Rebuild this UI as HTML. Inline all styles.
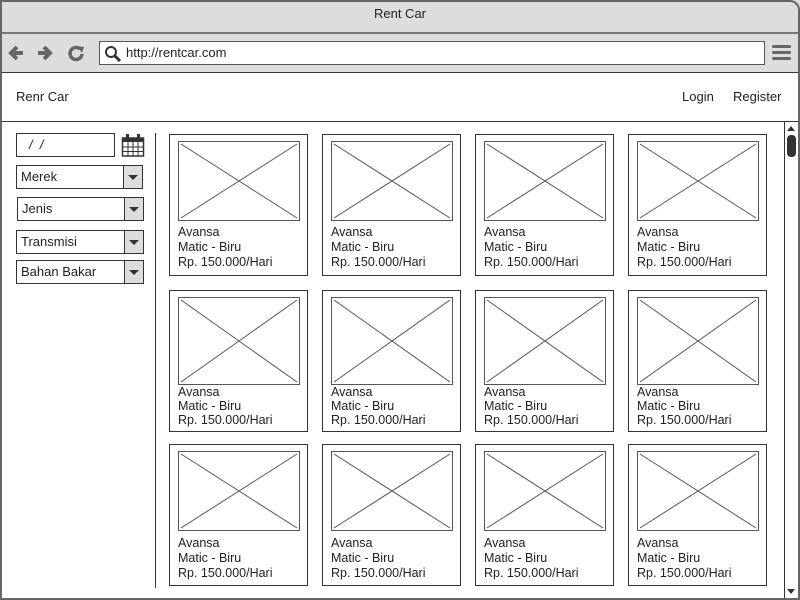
<!DOCTYPE html>
<html><head><meta charset="utf-8"><style>
*{margin:0;padding:0;box-sizing:border-box}
body{width:800px;height:600px;position:relative;background:#fff;font-family:"Liberation Sans",sans-serif;font-size:13px;color:#222;overflow:hidden}
.a{position:absolute}
.frame{left:0;top:0;width:800px;height:600px;border:2px solid #666;border-radius:0 10px 0 0}
.card{position:absolute;width:139px;height:142px;border:1px solid #333;background:#fff}
.card svg{position:absolute;left:8px;top:6px}
.card .t{position:absolute;left:8px;font-size:12.5px;line-height:15px}
.sel{position:absolute;height:24px;border:1px solid #333;background:#fff;font-size:13px;padding:3px 4px}
.sel b{position:absolute;right:0;top:0;width:19px;height:22px;background:#ddd;border-left:1px solid #333}
.sel b:after{content:"";position:absolute;left:4px;top:9px;border-left:5px solid transparent;border-right:5px solid transparent;border-top:5px solid #333}
</style></head><body>
<div class="a" style="left:0;top:0;width:800px;height:72px;background:#ddd"></div>
<div class="a" style="left:0;top:32px;width:800px;height:2px;background:#777"></div>
<div class="a" style="left:0;top:72px;width:800px;height:1px;background:#333"></div>
<div class="a" style="left:0;top:121px;width:800px;height:1px;background:#333"></div>
<div class="a" style="left:0;top:6px;width:800px;text-align:center;font-size:13px">Rent Car</div>
<svg class="a" style="left:8px;top:42px" width="80" height="22">
<path d="M3 11h12M9 5l-6 6 6 6" stroke="#666" stroke-width="4" fill="none"/>
<path d="M30 11h12M36 5l6 6-6 6" stroke="#666" stroke-width="4" fill="none"/>
<path d="M72 7a6 6 0 1 0 2 5" stroke="#666" stroke-width="3.5" fill="none"/><path d="M69 4l7 1-2 6z" fill="#666"/>
</svg>
<div class="a" style="left:99px;top:41px;width:666px;height:24px;border:1px solid #555;background:#fff"></div>
<svg class="a" style="left:104px;top:45px" width="18" height="18"><circle cx="7" cy="7" r="5" stroke="#333" stroke-width="2" fill="none"/><path d="M11 11l5 5" stroke="#333" stroke-width="3"/></svg>
<div class="a" style="left:126px;top:45px;font-size:13px">http://rentcar.com</div>
<div class="a" style="left:772px;top:45px;width:19px;height:3px;background:#666;border-radius:2px"></div>
<div class="a" style="left:772px;top:51px;width:19px;height:3px;background:#666;border-radius:2px"></div>
<div class="a" style="left:772px;top:57px;width:19px;height:3px;background:#666;border-radius:2px"></div>
<div class="a" style="left:16px;top:89px">Renr Car</div>
<div class="a" style="left:682px;top:89px">Login</div>
<div class="a" style="left:733px;top:89px">Register</div>
<div class="a" style="left:16px;top:133px;width:99px;height:24px;border:1px solid #333;padding:3px 12px;font-style:italic">/ &nbsp;/</div>
<svg class="a" style="left:121px;top:133px" width="24" height="24"><rect x="1.5" y="5" width="21" height="18" fill="#fff" stroke="#333" stroke-width="1.5"/><rect x="1.5" y="5" width="21" height="4" fill="#333"/><path d="M7 9v14M12 9v14M17 9v14M2 14h20M2 18.5h20" stroke="#333"/><rect x="5" y="1" width="3" height="6" fill="#333"/><rect x="16" y="1" width="3" height="6" fill="#333"/></svg>
<div class="sel" style="left:16px;top:165px;width:127px">Merek<b></b></div>
<div class="sel" style="left:17px;top:197px;width:127px">Jenis<b></b></div>
<div class="sel" style="left:16px;top:230px;width:128px">Transmisi<b></b></div>
<div class="sel" style="left:16px;top:260px;width:128px">Bahan Bakar<b></b></div>
<div class="a" style="left:155px;top:133px;width:1px;height:455px;background:#333"></div>
<div class="a" style="left:784px;top:122px;width:15px;height:476px;border-left:1px solid #333;background:#fff"></div>
<div class="a" style="left:787px;top:126px;border-left:4px solid transparent;border-right:4px solid transparent;border-bottom:5px solid #333"></div>
<div class="a" style="left:787px;top:135px;width:9px;height:22px;background:#333;border-radius:4px"></div>
<div class="a" style="left:787px;top:589px;border-left:4px solid transparent;border-right:4px solid transparent;border-top:5px solid #333"></div>

<div class="card" style="left:169px;top:134px"><svg width="122" height="80"><rect x=".5" y=".5" width="121" height="79" fill="none" stroke="#555"/><path d="M3 3L119 77M119 3L3 77" stroke="#555"/></svg><div class="t" style="top:90px">Avansa<br>Matic - Biru<br>Rp. 150.000/Hari</div></div>
<div class="card" style="left:322px;top:134px"><svg width="122" height="80"><rect x=".5" y=".5" width="121" height="79" fill="none" stroke="#555"/><path d="M3 3L119 77M119 3L3 77" stroke="#555"/></svg><div class="t" style="top:90px">Avansa<br>Matic - Biru<br>Rp. 150.000/Hari</div></div>
<div class="card" style="left:475px;top:134px"><svg width="122" height="80"><rect x=".5" y=".5" width="121" height="79" fill="none" stroke="#555"/><path d="M3 3L119 77M119 3L3 77" stroke="#555"/></svg><div class="t" style="top:90px">Avansa<br>Matic - Biru<br>Rp. 150.000/Hari</div></div>
<div class="card" style="left:628px;top:134px"><svg width="122" height="80"><rect x=".5" y=".5" width="121" height="79" fill="none" stroke="#555"/><path d="M3 3L119 77M119 3L3 77" stroke="#555"/></svg><div class="t" style="top:90px">Avansa<br>Matic - Biru<br>Rp. 150.000/Hari</div></div>

<div class="card" style="left:169px;top:290px"><svg width="122" height="88"><rect x=".5" y=".5" width="121" height="87" fill="none" stroke="#555"/><path d="M3 3L119 85M119 3L3 85" stroke="#555"/></svg><div class="t" style="top:94px;line-height:14px">Avansa<br>Matic - Biru<br>Rp. 150.000/Hari</div></div>
<div class="card" style="left:322px;top:290px"><svg width="122" height="88"><rect x=".5" y=".5" width="121" height="87" fill="none" stroke="#555"/><path d="M3 3L119 85M119 3L3 85" stroke="#555"/></svg><div class="t" style="top:94px;line-height:14px">Avansa<br>Matic - Biru<br>Rp. 150.000/Hari</div></div>
<div class="card" style="left:475px;top:290px"><svg width="122" height="88"><rect x=".5" y=".5" width="121" height="87" fill="none" stroke="#555"/><path d="M3 3L119 85M119 3L3 85" stroke="#555"/></svg><div class="t" style="top:94px;line-height:14px">Avansa<br>Matic - Biru<br>Rp. 150.000/Hari</div></div>
<div class="card" style="left:628px;top:290px"><svg width="122" height="88"><rect x=".5" y=".5" width="121" height="87" fill="none" stroke="#555"/><path d="M3 3L119 85M119 3L3 85" stroke="#555"/></svg><div class="t" style="top:94px;line-height:14px">Avansa<br>Matic - Biru<br>Rp. 150.000/Hari</div></div>

<div class="card" style="left:169px;top:444px"><svg width="122" height="80"><rect x=".5" y=".5" width="121" height="79" fill="none" stroke="#555"/><path d="M3 3L119 77M119 3L3 77" stroke="#555"/></svg><div class="t" style="top:91px">Avansa<br>Matic - Biru<br>Rp. 150.000/Hari</div></div>
<div class="card" style="left:322px;top:444px"><svg width="122" height="80"><rect x=".5" y=".5" width="121" height="79" fill="none" stroke="#555"/><path d="M3 3L119 77M119 3L3 77" stroke="#555"/></svg><div class="t" style="top:91px">Avansa<br>Matic - Biru<br>Rp. 150.000/Hari</div></div>
<div class="card" style="left:475px;top:444px"><svg width="122" height="80"><rect x=".5" y=".5" width="121" height="79" fill="none" stroke="#555"/><path d="M3 3L119 77M119 3L3 77" stroke="#555"/></svg><div class="t" style="top:91px">Avansa<br>Matic - Biru<br>Rp. 150.000/Hari</div></div>
<div class="card" style="left:628px;top:444px"><svg width="122" height="80"><rect x=".5" y=".5" width="121" height="79" fill="none" stroke="#555"/><path d="M3 3L119 77M119 3L3 77" stroke="#555"/></svg><div class="t" style="top:91px">Avansa<br>Matic - Biru<br>Rp. 150.000/Hari</div></div>

<div class="a frame"></div>
</body></html>
